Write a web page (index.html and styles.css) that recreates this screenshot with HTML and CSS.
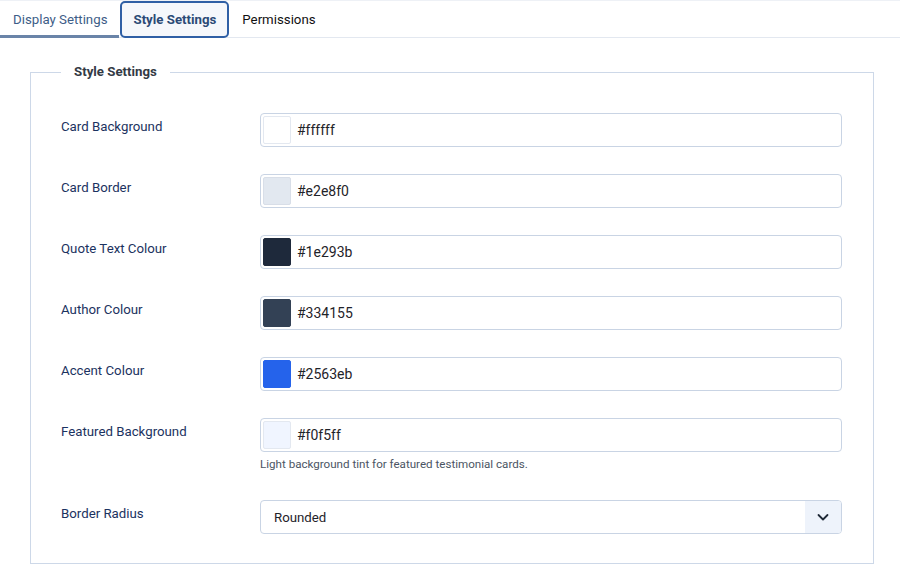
FILE: index.html
```html
<!DOCTYPE html>
<html lang="en">
<head>
<meta charset="utf-8">
<title>Style Settings</title>
<link rel="stylesheet" href="styles.css">
</head>
<body>
<nav class="tabs">
  <button class="tab tab-done">Display Settings</button>
  <button class="tab tab-active">Style Settings</button>
  <button class="tab">Permissions</button>
</nav>
<main class="page">
  <fieldset class="group">
    <legend class="group-title">Style Settings</legend>

    <div class="row">
      <label class="label">Card Background</label>
      <div class="control">
        <div class="color-input"><span class="swatch sw-ffffff"></span><span class="hex">#ffffff</span></div>
      </div>
    </div>

    <div class="row">
      <label class="label">Card Border</label>
      <div class="control">
        <div class="color-input"><span class="swatch sw-e2e8f0"></span><span class="hex">#e2e8f0</span></div>
      </div>
    </div>

    <div class="row">
      <label class="label">Quote Text Colour</label>
      <div class="control">
        <div class="color-input"><span class="swatch sw-1e293b"></span><span class="hex">#1e293b</span></div>
      </div>
    </div>

    <div class="row">
      <label class="label">Author Colour</label>
      <div class="control">
        <div class="color-input"><span class="swatch sw-334155"></span><span class="hex">#334155</span></div>
      </div>
    </div>

    <div class="row">
      <label class="label">Accent Colour</label>
      <div class="control">
        <div class="color-input"><span class="swatch sw-2563eb"></span><span class="hex">#2563eb</span></div>
      </div>
    </div>

    <div class="row">
      <label class="label">Featured Background</label>
      <div class="control">
        <div class="color-input"><span class="swatch sw-f0f5ff"></span><span class="hex">#f0f5ff</span></div>
        <div class="help">Light background tint for featured testimonial cards.</div>
      </div>
    </div>

    <div class="row row-last">
      <label class="label">Border Radius</label>
      <div class="control">
        <div class="select">
          <span class="select-value">Rounded</span>
          <span class="select-arrow">
            <svg width="14" height="14" viewBox="0 0 14 14"><path d="M2.5 5 L7 9.5 L11.5 5" fill="none" stroke="#1f2937" stroke-width="1.8" stroke-linecap="round" stroke-linejoin="round"/></svg>
          </span>
        </div>
      </div>
    </div>
  </fieldset>
</main>
</body>
</html>
```

FILE: styles.css
```css
* { box-sizing: border-box; }

html, body {
  margin: 0;
  padding: 0;
  background: #ffffff;
  font-family: Roboto, "Liberation Sans", Arial, sans-serif;
  font-size: 13.25px;
  color: #1f2937;
}

.tabs {
  display: flex;
  align-items: stretch;
  height: 38px;
  border-top: 1px solid #eef1f6;
  border-bottom: 1px solid #e3e8f0;
  background: #ffffff;
}

.tab {
  font-family: inherit;
  font-size: 13.25px;
  background: transparent;
  border: 0;
  padding: 0 13px;
  margin: 0;
  color: #111111;
  white-space: nowrap;
  cursor: pointer;
}

.tab-done {
  color: #3d5d87;
  padding: 2px 12px 0 13px;
  border-bottom: 3px solid #6a84a8;
  margin-bottom: -1px;
}

.tab-active {
  color: #2b4a76;
  font-weight: 700;
  background: #f5f7fb;
  border: 2px solid #2f5fa5;
  border-radius: 5px;
  margin-left: 1px;
  padding: 0 11px;
  margin-bottom: -1px;
}

.page {
  padding: 24px 26px 0 30px;
}

.group {
  margin: 0;
  border: 1px solid #cdd8e8;
  padding: 12px 30px 29px 30px;
  min-width: 0;
}

.group-title {
  font-weight: 700;
  color: #333a45;
  font-size: 13.25px;
  line-height: 20px;
  padding: 0 13px;
}

.row {
  display: grid;
  grid-template-columns: 199px 582px;
  align-items: start;
  margin-top: 27px;
}

.row:first-of-type {
  margin-top: 19px;
}

.row.row-last {
  margin-top: 28px;
}

.label {
  color: #1b3260;
  font-size: 13.25px;
  line-height: 20px;
  padding-top: 4px;
}

.control {
  display: flex;
  flex-direction: column;
}

.color-input {
  display: flex;
  align-items: center;
  height: 34px;
  border: 1px solid #c9d4e4;
  border-radius: 4px;
  padding: 0 2px;
  background: #ffffff;
}

.swatch {
  width: 28px;
  height: 28px;
  border-radius: 2px;
  border: 1px solid #e3e8f0;
  flex: none;
}

.sw-ffffff { background: #ffffff; }
.sw-e2e8f0 { background: #e2e8f0; border-color: #d8dee8; }
.sw-1e293b { background: #1e293b; border-color: #1e293b; }
.sw-334155 { background: #334155; border-color: #334155; }
.sw-2563eb { background: #2563eb; border-color: #2563eb; }
.sw-f0f5ff { background: #f0f5ff; }

.hex {
  margin-left: 6px;
  color: #1f2329;
  font-size: 14px;
}

.help {
  margin-top: 4px;
  font-size: 11.6px;
  line-height: 16px;
  color: #4b5563;
}

.select {
  display: flex;
  align-items: stretch;
  height: 34px;
  border: 1px solid #c9d4e4;
  border-radius: 4px;
  overflow: hidden;
  background: #ffffff;
}

.select-value {
  flex: 1;
  display: flex;
  align-items: center;
  padding-left: 13px;
  color: #1f2329;
  font-size: 13.25px;
}

.select-arrow {
  width: 36px;
  display: flex;
  align-items: center;
  justify-content: center;
  background: #eef3fb;
}
```
